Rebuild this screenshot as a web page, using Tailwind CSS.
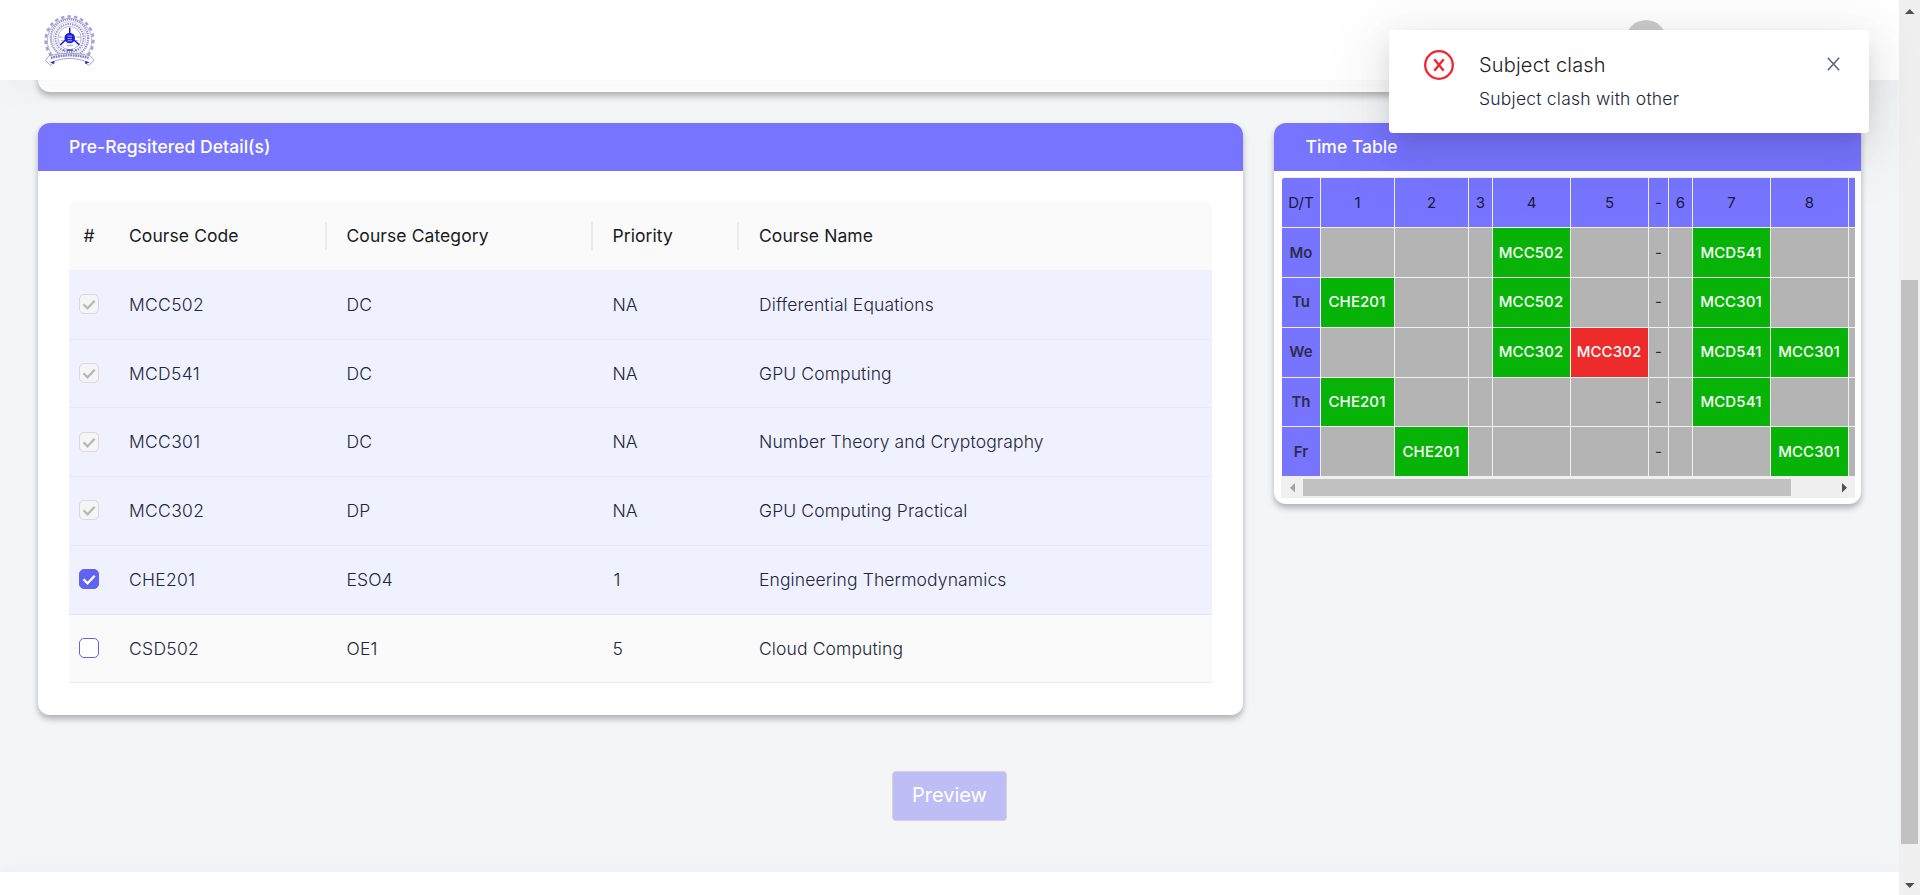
<!DOCTYPE html>
<html lang="en">
<head>
<meta charset="utf-8">
<title>Pre-Registration</title>
<script src="https://cdn.jsdelivr.net/npm/@tailwindcss/browser@4"></script>
</head>
<body class="h-[895px] w-[1920px] overflow-hidden bg-[#f4f5f7] font-['Inter',sans-serif] text-[17.5px] font-light text-[#22263c]">
<div class="relative flex h-[895px] w-[1920px]">
  <div class="flex h-full w-[1899px] flex-col overflow-hidden">
    <header class="relative z-10 flex h-20 shrink-0 items-start justify-between bg-white pl-[44px] shadow-[0_10px_30px_0_rgba(70,65,95,0.04)]">
      <svg class="mt-[15px] h-[53px] w-[53px]" viewBox="0 0 54 54" fill="none">
        <path d="M7.500 41.500 A24.300 24.300 0 1 1 44.500 41.500" stroke="#a3a3d4" stroke-width="2.600" stroke-dasharray="3.600 3"/>
        <path d="M8.500 40.500 A22.600 22.600 0 1 1 43.500 40.500" stroke="#9c9cd0" stroke-width=".8"/>
        <circle cx="26" cy="23.500" r="19" stroke="#9696d0" stroke-width="2.300" stroke-dasharray="1.300 .8"/>
        <circle cx="26" cy="23.500" r="16.600" stroke="#b3b3dc" stroke-width=".7"/>
        <circle cx="26" cy="23.500" r="14.300" stroke="#9494d0" stroke-width="2" stroke-dasharray="1.500 .9"/>
        <circle cx="26" cy="23.500" r="11.800" stroke="#8f8fc0" stroke-width=".7" fill="#fff"/>
        <path d="M15 22.500h4M33 22.500h4M17 26h3M32 26h3" stroke="#bcbce0" stroke-width="1.300"/>
        <path d="M26.200 13v8M16.500 30.500l5.500-5M36 30.500l-5.500-5" stroke="#1010e8" stroke-width="1.500"/>
        <circle cx="26.200" cy="23.500" r="5.400" fill="#1c1ce0"/>
        <path d="M24 21.500h4.500M24 24h4.500M24 26.300h4.500" stroke="#b0b0e8" stroke-width="1"/>
        <path d="M23 31h6.500" stroke="#b5b5dd" stroke-width="1.500"/>
        <path d="M19.500 35.800h1.300M23 35.800h6.500M31.800 35.800h1.300" stroke="#5555cc" stroke-width="1.600"/>
        <path d="M5 41.500Q26 36.500 47 41.500L51 46.500L45 51.500L41 46.500Q26 42 11.500 46.500L7 51.500L1.500 46.500Z" fill="#fff" stroke="#9898bb" stroke-width=".9"/>
        <path d="M7 43.700Q26 38.500 45.500 43.700" stroke="#8585c4" stroke-width="2.500" stroke-dasharray="1.800 .7"/>
        <path d="M6 48.500l4.500-2v3.500zM46.500 48.500l-4.500-2v3.500z" fill="#2424ef"/>
      </svg>
      <div class="mt-5 mr-[233px] h-10 w-10 rounded-full bg-[#ccc]"></div>
    </header>

    <main class="flex shrink-0 flex-col px-[38px]">
      <div class="-mt-5 h-8 rounded-b-xl bg-white shadow-[0_4px_6px_rgba(0,0,0,0.28)]"></div>

      <div class="mt-[31px] flex items-start gap-[31px]">
        <section class="h-[592px] w-[1205px] rounded-xl bg-white shadow-[0_4px_6px_rgba(0,0,0,0.28)]">
          <h2 class="flex h-12 items-center rounded-t-xl bg-[#7774ff] px-[31px] font-medium tracking-[0.05px] text-white">Pre-Regsitered Detail(s)</h2>
          <div class="px-[31px] pt-[31px]">
            <table class="w-full table-fixed border-separate border-spacing-0 text-left">
              <colgroup><col class="w-10"><col class="w-[217.500px]"><col class="w-[266px]"><col class="w-[146.500px]"><col></colgroup>
              <thead>
                <tr class="h-[68.750px] tracking-[0.08px] text-[#191a22]">
                  <th class="rounded-tl-md border-b border-[#f0f0f0] bg-[#fafafa] text-center font-normal">#</th>
                  <th class="border-b border-[#f0f0f0] bg-[#fafafa] p-0 font-normal"><div class="flex h-7 items-center border-r-2 border-[#ececec] pl-5">Course Code</div></th>
                  <th class="border-b border-[#f0f0f0] bg-[#fafafa] p-0 font-normal"><div class="flex h-7 items-center border-r-2 border-[#ececec] pl-5">Course Category</div></th>
                  <th class="border-b border-[#f0f0f0] bg-[#fafafa] p-0 font-normal"><div class="flex h-7 items-center border-r-2 border-[#ececec] pl-5">Priority</div></th>
                  <th class="rounded-tr-md border-b border-[#f0f0f0] bg-[#fafafa] py-0 pl-5 font-normal">Course Name</th>
                </tr>
              </thead>
              <tbody id="courses"></tbody>
            </table>
          </div>
        </section>

        <section class="h-[381px] w-[587px] rounded-xl bg-white shadow-[0_4px_6px_rgba(0,0,0,0.28)]">
          <h2 class="flex h-12 items-center rounded-t-xl bg-[#7774ff] px-[31.500px] font-medium text-white">Time Table</h2>
          <div class="mx-[7px] mt-[6px] w-[574px] overflow-hidden rounded-tl-md pl-px">
            <div id="timetable" class="grid w-[573px] grid-cols-[38px_73px_73px_23px_77px_77px_19px_23px_77px_77px_6px] grid-rows-[49px_49px_49px_49px_48px_49px] gap-px overflow-hidden border-y border-[#f0f0f0] bg-[#f0f0f0] text-[15px]"></div>
            <div class="-ml-px flex h-[21px] items-center bg-[#f0f0f0]">
              <svg class="h-[21px] w-[22px]" viewBox="0 0 22 21"><path d="M14 6v9.500L9 10.750z" fill="#a3a3a3"/></svg>
              <div class="h-[17px] w-[488px] bg-[#c1c1c1]"></div>
              <svg class="ml-[42px] h-[21px] w-[22px]" viewBox="0 0 22 21"><path d="M9 6v9.500l5-4.750z" fill="#505050"/></svg>
            </div>
          </div>
        </section>
      </div>

      <div class="mt-14 flex justify-center">
        <button class="flex h-[50px] w-[115px] items-center justify-center rounded-[4px] border border-[#d4d4dc] bg-[#bebdf6] pb-[2px] text-[20px] font-normal text-white">Preview</button>
      </div>
    </main>
    <footer class="mt-[51px] h-[23px] shrink-0 bg-white shadow-[0_-4px_20px_rgba(60,60,70,0.03)]"></footer>
  </div>

  <div class="flex w-[21px] flex-col items-center bg-[#f0f0f0]">
    <svg class="h-[21px] w-[21px]" viewBox="0 0 21 21"><path d="M6 14h9.500L10.750 9z" fill="#505050"/></svg>
    <div class="mt-[259px] h-[564px] w-[17px] bg-[#c1c1c1]"></div>
    <svg class="mt-[30px] h-[21px] w-[21px]" viewBox="0 0 21 21"><path d="M6 9h9.500l-4.750 5z" fill="#505050"/></svg>
  </div>

  <div class="absolute top-[30px] left-[1389px] z-20 flex h-[103px] w-[480px] items-start rounded-[4px] bg-white pt-5 pl-[35px] shadow-[0_7px_20px_-8px_rgba(0,0,0,0.12),0_11px_35px_rgba(0,0,0,0.08),0_15px_60px_20px_rgba(0,0,0,0.05)]">
    <svg class="h-[30px] w-[30px]" viewBox="0 0 30 30" fill="none" stroke="#f5222d" stroke-width="2.300"><circle cx="15" cy="15" r="13.800"/><path d="M10.300 9.300l9.400 11.400M19.700 9.300l-9.400 11.400" stroke-width="2.300"/></svg>
    <div class="ml-[25px] flex-1">
      <div class="text-[20px] leading-[30px] tracking-[0.18px] text-[#222]">Subject clash</div>
      <div class="mt-[6px] leading-[26px] tracking-[0.22px]">Subject clash with other</div>
    </div>
    <svg class="mt-[7px] mr-[29px] h-[14px] w-[13px]" viewBox="0 0 13 14" fill="none" stroke="#5a5f7d" stroke-width="1.500"><path d="M.8.800l11.400 12.400M12.200.800L.8 13.200"/></svg>
  </div>
</div>
<script>
const courses = [
  ['MCC502','DC','NA','Differential Equations','disabled'],
  ['MCD541','DC','NA','GPU Computing','disabled'],
  ['MCC301','DC','NA','Number Theory and Cryptography','disabled'],
  ['MCC302','DP','NA','GPU Computing Practical','disabled'],
  ['CHE201','ESO4','1','Engineering Thermodynamics','checked'],
  ['CSD502','OE1','5','Cloud Computing','open']
];
const boxes = { disabled: 'border-[#d9d9d9] bg-[#f5f5f5] text-[#b8b8b8]', checked: 'border-[#5f63f2] bg-[#5f63f2] text-white', open: 'border-[#5f63f2] bg-white text-transparent' };
document.getElementById('courses').innerHTML = courses.map(([code, cat, pr, name, state], i) => {
  const open = state === 'open';
  const bg = open ? 'bg-[#fafafa]' : 'bg-[#eff1ff]';
  const line = state === 'disabled' ? 'border-[#e8e9f6]' : open ? 'border-[#ebebeb]' : 'border-[#e2e3f5]';
  const td = `border-b ${line} ${bg} pb-0 ${i === 1 || i === 5 ? 'pt-px' : 'pt-0'}`;
  return `<tr class="h-[68.750px]"><td class="border-b ${line} ${bg} pt-0 pb-px pl-[10px]"><span class="flex h-5 w-5 items-center justify-center rounded-[5px] border ${boxes[state]}"><svg class="h-5 w-5 shrink-0" viewBox="0 0 20 20" fill="none" stroke="currentColor" stroke-width="2.300"><path d="M4.500 10.300l4 4 7.200-7.500"/></svg></span></td><td class="${td} pl-5 tracking-[0.3px]">${code}</td><td class="${td} pl-5 tracking-[0.2px]">${cat}</td><td class="${td} ${pr === '1' ? 'pl-[21px]' : 'pl-5'}">${pr}</td><td class="${td} pl-5 tracking-[0.12px]">${name}</td></tr>`;
}).join('');

const grid = [
  ['D/T','1','2','3','4','5','-','6','7','8',''],
  ['Mo','','','','MCC502','','-','','MCD541','',''],
  ['Tu','CHE201','','','MCC502','','-','','MCC301','',''],
  ['We','','','','MCC302','!MCC302','-','','MCD541','MCC301',''],
  ['Th','CHE201','','','','','-','','MCD541','',''],
  ['Fr','','CHE201','','','','-','','','MCC301','']
];
document.getElementById('timetable').innerHTML = grid.map((row, r) => row.map((t, c) => {
  let k = 'bg-[#b4b4b4] font-normal';
  if (r === 0) k = 'bg-[#7774ff] font-normal text-[#1a1a3c]';
  else if (c === 0) k = 'bg-[#7774ff] font-semibold text-[#2d2d4a]';
  else if (t[0] === '!') k = 'bg-[#ee2b2b] pr-px font-medium text-white tracking-[0.1px]';
  else if (t.length > 1) k = 'bg-[#07b307] pr-px font-medium text-white tracking-[0.1px]';
  const shift = r === 2 || r === 3 ? 'pt-0' : 'pt-px';
  return `<div class="flex items-center justify-center overflow-hidden ${shift} ${k}">${t.replace('!', '')}</div>`;
}).join('')).join('');
</script>
</body>
</html>
